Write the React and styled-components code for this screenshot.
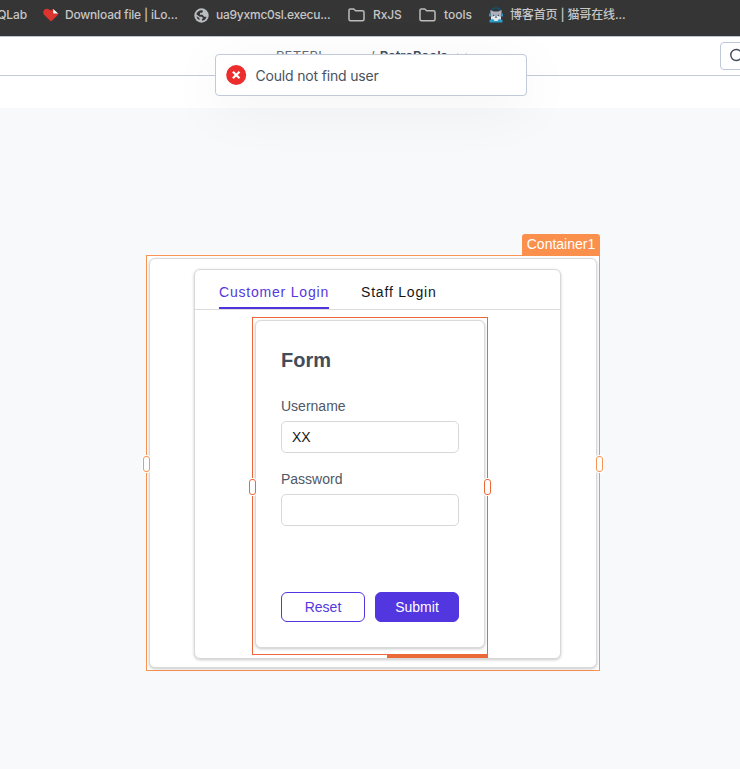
import React from "react";
import styled, { createGlobalStyle } from "styled-components";

const GlobalStyle = createGlobalStyle`
  * { box-sizing: border-box; }
  body { margin: 0; background: #f8f9fb; font-family: "Liberation Sans", Arial, sans-serif; }
`;

const Page = styled.div`
  position: relative;
  width: 740px;
  height: 769px;
  overflow: hidden;
  background: #f8f9fb;
`;

const BookmarkBar = styled.nav`
  display: flex;
  height: 36px;
  padding-top: 5px;
  background: #353535;
  color: #c6c6c6;
  font: 500 12px/20px Inter, "Noto Sans CJK SC", sans-serif;
  white-space: nowrap;
`;

const Bookmark = styled.div`
  display: flex;
  flex: none;
  align-items: center;
  width: ${(p) => p.$width}px;
  height: 20px;
  gap: ${(p) => p.$gap || 6}px;
  letter-spacing: ${(p) => p.$spacing || 0}px;
  svg { flex: none; }
`;

const ClippedBookmark = styled(Bookmark)`
  justify-content: flex-end;
  padding-right: 16px;
`;

const Header = styled.header`
  display: flex;
  justify-content: space-between;
  height: 40px;
  border-top: 1px solid #bcc7d4;
  border-bottom: 1px solid #c2cbda;
  background: #fff;
  overflow: hidden;
`;

const Breadcrumb = styled.div`
  display: flex;
  align-items: center;
  height: 38px;
  padding-left: 276px;
  color: #626c78;
  font: 13px/20px Inter, sans-serif;
`;

const Workspace = styled.span`
  width: 94px;
  letter-spacing: 0.3px;
`;

const AppName = styled.span`
  margin-left: 5px;
  margin-right: 8px;
  color: #444d5a;
  font-weight: 600;
`;

const SearchButton = styled.button`
  flex: none;
  width: 40px;
  height: 28px;
  margin: 5px -20px 0 0;
  padding: 0 0 0 9px;
  border: 1px solid #bfc8d8;
  border-radius: 4px;
  background: #fff;
  text-align: left;
  line-height: 0;
`;

const Toolbar = styled.div`
  height: 32px;
  background: #fff;
`;

const Toast = styled.div`
  position: absolute;
  z-index: 5;
  top: 54px;
  left: 215px;
  display: flex;
  align-items: center;
  gap: 9px;
  width: 312px;
  height: 42px;
  padding: 0 10px 0 9.5px;
  border: 1px solid #c1cad9;
  border-radius: 4px;
  background: #fff;
  box-shadow: 0 12px 60px rgba(0, 0, 0, 0.055);
  color: #4a5260;
  font: 14px/20px Inter, sans-serif;
  letter-spacing: -0.18px;
`;

const ToastText = styled.span`
  padding-top: 2px;
`;

const Canvas = styled.main`
  display: flex;
  align-items: flex-start;
  padding: 147px 0 0 146px;
`;

const Selection = styled.div`
  position: relative;
  flex: none;
  width: ${(p) => p.$width}px;
  height: ${(p) => p.$height}px;
  padding: 2px;
  border: 1px solid ${(p) => p.$color};
  background: #fff;
`;

const Handle = styled.span`
  position: absolute;
  ${(p) => p.$side}: -4px;
  top: ${(p) => p.$top}px;
  width: 7px;
  height: 16px;
  border: 1px solid ${(p) => p.$color};
  border-radius: 3px;
  background: #fff;
  box-shadow: 0 0 0 1px #fff;
`;

const NameTag = styled.span`
  position: absolute;
  right: -1px;
  bottom: 100%;
  width: 78px;
  height: 22px;
  border-radius: 3px 3px 0 0;
  background: #fb904c;
  color: #fff;
  font-size: 14px;
  line-height: 21px;
  text-align: center;
`;

const ClippedTag = styled.span`
  position: absolute;
  right: -1px;
  top: 100%;
  width: 101px;
  height: 4px;
  background: #eb6838;
`;

const Card = styled.section`
  border: 1px solid #d9d9db;
  border-radius: 6px;
  background: #fff;
  box-shadow: 0 1px 3px rgba(0, 0, 0, 0.22);
`;

const ContainerCard = styled(Card)`
  width: 448px;
  height: 410px;
  padding: 10px 0 0 44px;
`;

const TabsCard = styled(Card)`
  width: 367px;
  height: 390px;
`;

const TabList = styled.div`
  display: flex;
  gap: 32px;
  height: 40px;
  padding-left: 24px;
  border-bottom: 1px solid #dcdcde;
`;

const Tab = styled.button`
  height: 39px;
  padding: 6px 0 0;
  border: 0;
  border-bottom: 2px solid ${(p) => (p.$active ? "#5035de" : "transparent")};
  background: transparent;
  color: ${(p) => (p.$active ? "#5438dd" : "#161616")};
  font: 14px/20px "Liberation Sans", Arial, sans-serif;
  letter-spacing: 0.8px;
  white-space: nowrap;
`;

const TabPanel = styled.div`
  padding: 7px 0 0 57px;
`;

const FormCard = styled(Card)`
  display: flex;
  flex-direction: column;
  width: 230px;
  height: 328px;
  padding: 26px 25px;
`;

const FormTitle = styled.h2`
  margin: 0 0 23px;
  color: #434c59;
  font-size: 20px;
  line-height: 26px;
`;

const Field = styled.label`
  display: flex;
  flex-direction: column;
  gap: 5px;
  margin-bottom: 16px;
  color: #4e5766;
  font-size: 14px;
  line-height: 20px;
`;

const Input = styled.input`
  width: 178px;
  height: 32px;
  margin: 0;
  padding: 0 10px;
  border: 1px solid #d8d8d9;
  border-radius: 5px;
  outline: none;
  background: #fff;
  color: #171717;
  font: 14px "Liberation Sans", Arial, sans-serif;
`;

const Actions = styled.div`
  display: flex;
  gap: 10px;
  margin-top: 50px;
`;

const Button = styled.button`
  width: 84px;
  height: 30px;
  padding: 0;
  border: 1px solid #5236df;
  border-radius: 6px;
  background: ${(p) => (p.$primary ? "#5236df" : "#fff")};
  color: ${(p) => (p.$primary ? "#fff" : "#5438dd")};
  font: 14px "Liberation Sans", Arial, sans-serif;
`;

const HeartIcon = () => (
  <svg width="17" height="14" viewBox="0 0 17 14">
    <path d="M8 13.5 1 6.8C-1.5 3.5 2.5-1 6.5 1.7L8 2.6 10 1v4.4h6L13.5 8.2Z" fill="#dc342f" />
    <path d="m10.2 1 5 4.4h-5Z" fill="#fff" />
  </svg>
);

const GlobeIcon = () => (
  <svg width="15" height="15" viewBox="0 0 15 15">
    <circle cx="7.5" cy="7.5" r="7.2" fill="#b9bdc2" />
    <path d="M8.2 2.2 9 3.2 8 4.8H6.2L5.8 6.7h2.6l1.7 2h2.5c-.6 2.1-2.2 3.6-4.2 4l-.6-1.2L9 10 7.8 8.7H5.7L2.3 6.3C2.9 4 5.2 2 8.2 2.2M2.5 8.2l2.7 1.6.5 2.3C4 11.5 2.8 10 2.5 8.2" fill="#353535" />
  </svg>
);

const FolderIcon = () => (
  <svg width="17" height="14" viewBox="0 0 17 14" fill="none" stroke="#bcbcbc" strokeWidth="1.5" strokeLinejoin="round">
    <path d="M1 11.2V2.3Q1 1 2.3 1h3.5l1.8 1.8h6.8Q16 2.8 16 4.2v7Q16 12.7 14.5 12.7h-12Q1 12.7 1 11.2Z" />
  </svg>
);

const CatIcon = () => (
  <svg width="16" height="16" viewBox="0 0 16 16">
    <path d="M2.5 5Q4 1 8 1t5.5 4" fill="none" stroke="#174f6e" strokeWidth="1.5" />
    <path d="M2.5 9V3l3.2 1.4h4.6L13.5 3v6Q12 12.5 8 12.5T2.5 9" fill="#a9b1bf" />
    <path d="m3 4 2 1-1.5 2zm10 0-2 1 1.5 2z" fill="#d8a9b1" />
    <path d="m3 10 3-1h4l3 1v4H3Z" fill="#dfe6ed" />
    <path d="M1 6.5h1.5v3H1zm12.5 0H15v3h-1.5zM1.5 13 5 12l1.5 2h3l1.5-2 3.5 1v2.5h-13Z" fill="#299cc8" />
    <path d="M5 8.3h1.2m3.6 0H11M7 10h2" stroke="#354052" />
  </svg>
);

const ErrorIcon = () => (
  <svg width="21" height="20" viewBox="0 0 21 20">
    <circle cx="10.2" cy="10" r="10" fill="#eb2d2d" />
    <path d="m6.9 6.7 6.6 6.6m0-6.6-6.6 6.6" stroke="#fff" strokeWidth="2.2" />
  </svg>
);

const ChevronIcon = () => (
  <svg width="12" height="8" viewBox="0 0 12 8" fill="none" stroke="#a5aeba">
    <path d="m1.5 1.5 4.5 4 4.5-4" />
  </svg>
);

const SearchIcon = () => (
  <svg width="18" height="18" viewBox="0 0 18 18" fill="none" stroke="#424a57" strokeWidth="1.4">
    <circle cx="6.3" cy="8" r="5.5" />
    <path d="m10.3 12 5 5" />
  </svg>
);

const ORANGE = "#f99452";
const RED_ORANGE = "#ee6838";

export default function App() {
  return (
    <Page>
      <GlobalStyle />
      <BookmarkBar>
        <ClippedBookmark $width={43} $spacing={-0.1}>QLab</ClippedBookmark>
        <Bookmark $width={151} $gap={5} $spacing={-0.19}><HeartIcon />Download file | iLo...</Bookmark>
        <Bookmark $width={154} $gap={7} $spacing={-0.24}><GlobeIcon />ua9yxmc0sl.execu...</Bookmark>
        <Bookmark $width={71} $gap={8} $spacing={-0.15}><FolderIcon />RxJS</Bookmark>
        <Bookmark $width={69} $gap={8}><FolderIcon />tools</Bookmark>
        <Bookmark $width={160} $spacing={-0.15}><CatIcon />博客首页 | 猫哥在线...</Bookmark>
      </BookmarkBar>
      <Header>
        <Breadcrumb>
          <Workspace>PETERI</Workspace>/<AppName>RetroPools</AppName><ChevronIcon />
        </Breadcrumb>
        <SearchButton aria-label="Search"><SearchIcon /></SearchButton>
      </Header>
      <Toolbar />
      <Toast role="alert"><ErrorIcon /><ToastText>Could not find user</ToastText></Toast>
      <Canvas>
        <Selection $width={454} $height={416} $color={ORANGE}>
          <NameTag>Container1</NameTag>
          <ContainerCard>
            <TabsCard>
              <TabList>
                <Tab $active>Customer Login</Tab>
                <Tab>Staff Login</Tab>
              </TabList>
              <TabPanel>
                <Selection $width={236} $height={338} $color={RED_ORANGE}>
                  <FormCard>
                    <FormTitle>Form</FormTitle>
                    <Field>Username<Input defaultValue="XX" /></Field>
                    <Field>Password<Input type="password" /></Field>
                    <Actions>
                      <Button>Reset</Button>
                      <Button $primary>Submit</Button>
                    </Actions>
                  </FormCard>
                  <Handle $side="left" $top={161} $color={RED_ORANGE} />
                  <Handle $side="right" $top={161} $color={RED_ORANGE} />
                  <ClippedTag />
                </Selection>
              </TabPanel>
            </TabsCard>
          </ContainerCard>
          <Handle $side="left" $top={200} $color={ORANGE} />
          <Handle $side="right" $top={200} $color={ORANGE} />
        </Selection>
      </Canvas>
    </Page>
  );
}
